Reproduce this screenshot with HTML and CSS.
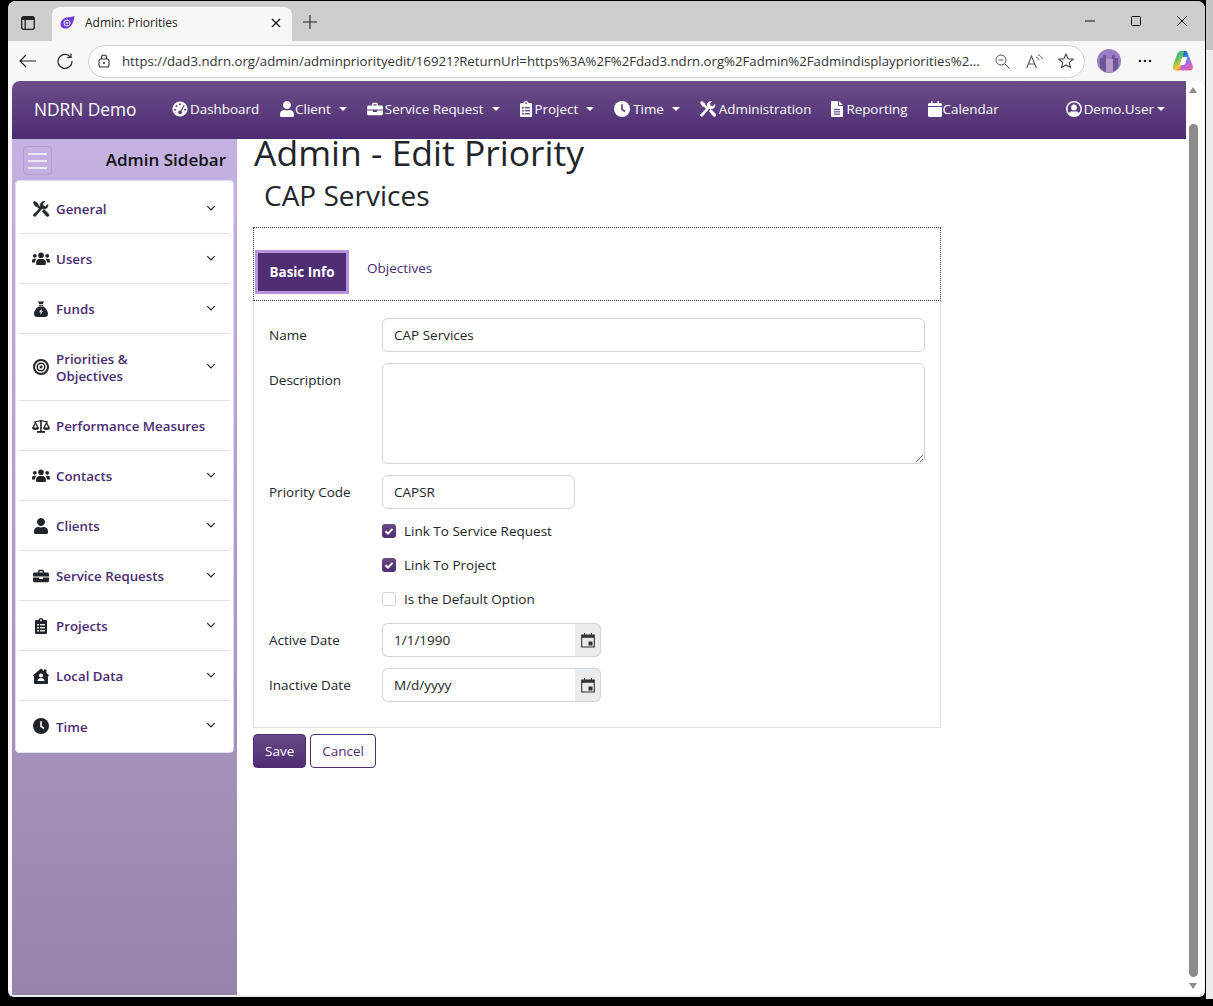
FILE: index.html
```html
<!DOCTYPE html>
<html lang="en">
<head>
<meta charset="UTF-8">
<meta name="viewport" content="width=device-width, initial-scale=1.0">
<link rel="stylesheet" href="styles.css">
<title>Admin: Priorities</title>
</head>
<body>
<svg class="defs" width="0" height="0">
  <defs>
    <linearGradient id="cp-left" x1="0" y1="0" x2="0.6" y2="1"><stop offset="0" stop-color="#1f9be0"/><stop offset=".45" stop-color="#62c65a"/><stop offset=".75" stop-color="#f3c33a"/><stop offset="1" stop-color="#f0703a"/></linearGradient>
    <linearGradient id="cp-right" x1="0.3" y1="0" x2="0.7" y2="1"><stop offset="0" stop-color="#1c4fc4"/><stop offset=".35" stop-color="#3f8fe8"/><stop offset=".65" stop-color="#b066e6"/><stop offset="1" stop-color="#ef5fa0"/></linearGradient>
  </defs>
  <symbol id="i-gauge" viewBox="0 0 16 16"><circle cx="8" cy="8" r="7.6" fill="currentColor"/><g fill="var(--hole)"><circle cx="8" cy="3.3" r="1"/><circle cx="4.4" cy="5" r="1"/><circle cx="3" cy="8.8" r="1"/><circle cx="13" cy="8.8" r="1"/><path d="M11.8 3.9l1 .6-3.3 5.6a1.900 1.900 0 1 1-1-.6z"/></g></symbol>
  <symbol id="i-user" viewBox="0 0 448 512"><path fill="currentColor" d="M224 256c70.7 0 128-57.3 128-128S294.7 0 224 0 96 57.3 96 128s57.3 128 128 128zm89.6 32h-16.7c-22.2 10.2-46.9 16-72.9 16s-50.6-5.8-72.9-16h-16.7C60.2 288 0 348.2 0 422.4V464c0 26.5 21.5 48 48 48h352c26.5 0 48-21.5 48-48v-41.6c0-74.2-60.2-134.4-134.4-134.4z"/></symbol>
  <symbol id="i-case" viewBox="0 0 16 16"><path fill="currentColor" fill-rule="evenodd" d="M5 3.2C5 2.3 5.6 1.7 6.4 1.7h3.2c.8 0 1.4.6 1.4 1.5V4.5h3.5c.8 0 1.5.7 1.5 1.5v2.6H0V6c0-.8.7-1.5 1.500-1.500H5zm1.400.1v1.200h3.200V3.300zM0 9.600h6v1.300h4V9.600h6v3.200c0 .8-.7 1.500-1.500 1.500h-13C.7 14.300 0 13.600 0 12.800z"/></symbol>
  <symbol id="i-clipboard" viewBox="0 0 12 16"><path fill="currentColor" d="M1.300 2H3.500C3.700.8 4.700 0 6 0s2.300.8 2.500 2h2.200C11.400 2 12 2.600 12 3.300v11.400c0 .7-.6 1.300-1.300 1.300H1.300C.6 16 0 15.400 0 14.700V3.300C0 2.600.6 2 1.300 2z"/><g fill="var(--hole)"><circle cx="6" cy="2.200" r=".9"/><rect x="2.200" y="6" width="1.600" height="1.600"/><rect x="5" y="6.100" width="5" height="1.300"/><rect x="2.200" y="9" width="1.600" height="1.600"/><rect x="5" y="9.100" width="5" height="1.300"/><rect x="2.200" y="12" width="1.600" height="1.600"/><rect x="5" y="12.100" width="5" height="1.300"/></g></symbol>
  <symbol id="i-clock" viewBox="0 0 16 16"><circle cx="8" cy="8" r="8" fill="currentColor"/><path d="M8 3.300V8.300l3 2.200" fill="none" stroke="var(--hole)" stroke-width="1.600"/></symbol>
  <symbol id="i-tools" viewBox="0 0 16 16"><g fill="currentColor" stroke="currentColor" stroke-width=".7"><path d="M1 15l-.8-1 7.600-7.400-.5-1.400C6.700 3 8.600.4 11.600.3l-2 2.200.6 2.400 2.400.7L14.900 3.400c.4 3-2.400 5.100-4.700 4.300L9 7.400 2.400 15.200c-.4.400-1 .300-1.400-.200z"/><path d="M.3 1.300 1.500.2 5 2.700v1.400l3.200 3.200-1.200 1.200-3.200-3.200H2.500z"/><path d="M9.300 10.200 11 8.500l4.500 4.500c.6.600.6 1.500 0 2.100-.6.600-1.500.6-2.100 0z"/></g></symbol>
  <symbol id="i-file" viewBox="0 0 12 16"><path fill="currentColor" d="M1 0H7V4.300C7 4.700 7.300 5 7.700 5H12V15c0 .6-.4 1-1 1H1c-.6 0-1-.4-1-1V1C0 .4.400 0 1 0zM8 0l4 4H8z"/><g fill="var(--hole)"><rect x="3" y="8" width="6" height="1.100"/><rect x="3" y="10.300" width="6" height="1.100"/><rect x="3" y="12.600" width="6" height="1.100"/></g></symbol>
  <symbol id="i-cal" viewBox="0 0 14 16"><path fill="currentColor" d="M3 0h1.500v2h5V0H11v2h1.500C13.300 2 14 2.700 14 3.500V5H0V3.500C0 2.700.7 2 1.500 2H3zM0 6h14v8.500c0 .8-.7 1.500-1.500 1.500h-11C.7 16 0 15.300 0 14.500z"/></symbol>
  <symbol id="i-ucircle" viewBox="0 0 16 16"><path fill="currentColor" fill-rule="evenodd" d="M8 0a8 8 0 1 1 0 16A8 8 0 0 1 8 0zm0 1.600a6.400 6.400 0 0 0-4.900 10.500C3.800 10.900 5 10.200 6 10.200c.7.300 1.300.4 2 .4s1.300-.1 2-.4c1 0 2.200.7 2.900 1.900A6.400 6.400 0 0 0 8 1.600zM8 3.500a2.900 2.900 0 1 1 0 5.800 2.900 2.900 0 0 1 0-5.800z"/></symbol>
  <symbol id="i-users" viewBox="0 0 18 14"><g fill="currentColor"><circle cx="9" cy="3.300" r="2.800"/><circle cx="2.800" cy="3.800" r="1.900"/><circle cx="15.200" cy="3.800" r="1.900"/><path d="M5 13c-.5 0-.9-.4-.9-.9V10.300C4.100 8.400 5.600 7 7.300 7h3.400c1.700 0 3.200 1.400 3.200 3.300v1.800c0 .5-.4.900-.9.900z"/><path d="M0 10.400V9c0-1.300.9-2.200 2-2.200h1.400c.3 0 .6.100.9.300C3.500 8 3 9 3 10.400z"/><path d="M18 10.400V9c0-1.300-.9-2.200-2-2.200h-1.400c-.3 0-.6.100-.9.300.8.900 1.300 1.900 1.300 3.300z"/></g></symbol>
  <symbol id="i-sack" viewBox="0 0 14 16"><path fill="currentColor" d="M4 .5h6L8.800 3.200H5.200zM5 4h4v.8H5zM4.800 5.600h4.400C11.500 7 14 9.800 14 13c0 1.700-1.300 3-3 3H3c-1.700 0-3-1.300-3-3C0 9.800 2.500 7 4.800 5.600z"/><path fill="var(--hole)" d="M7.800 7.500 5 11.300h1.700L6.200 14l2.800-3.800H7.300z"/></symbol>
  <symbol id="i-target" viewBox="0 0 16 16"><g fill="none" stroke="currentColor"><circle cx="8" cy="8" r="7" stroke-width="2"/><circle cx="8" cy="8" r="3.800" stroke-width="1.500"/></g><circle cx="8" cy="8" r="1.500" fill="currentColor"/></symbol>
  <symbol id="i-scale" viewBox="0 0 18 14"><g fill="currentColor"><rect x="8.200" y="1" width="1.600" height="11"/><rect x="5" y="12" width="8" height="1.800"/><path d="M2 2.500 9 1l7 1.500v1L9 2.200 2 3.500z"/><path fill-rule="evenodd" d="M3.500 2.500 7 9c0 1.200-1.500 2-3.500 2S0 10.200 0 9zM3.500 5 1.900 8.600h3.200zM14.500 2.500 18 9c0 1.200-1.500 2-3.500 2S11 10.200 11 9zM14.500 5 12.900 8.600h3.200z"/></g></symbol>
  <symbol id="i-house" viewBox="0 0 16 16"><path fill="currentColor" d="M8 .5 11 3V1.500h2.500V5L16 7.300 15 8.500V15c0 .6-.4 1-1 1H2c-.6 0-1-.4-1-1V8.500L0 7.300z"/><g fill="var(--hole)"><circle cx="8" cy="7.500" r="2"/><path d="M4.500 13c0-1.500 1.300-2.700 2.500-2.700h2c1.200 0 2.500 1.200 2.500 2.700z"/></g></symbol>
  <symbol id="i-chev" viewBox="0 0 16 16"><path d="M3 5.500 8 10.500 13 5.500" fill="none" stroke="currentColor" stroke-width="1.700"/></symbol>
  <symbol id="i-date" viewBox="0 0 14 16"><path fill="none" stroke="currentColor" stroke-width="1.100" d="M.7 3h12.600v12H.7zM3.500 1v3M10.500 1v3"/><rect x=".7" y="3" width="12.600" height="2.800" fill="currentColor"/><rect x="7.500" y="9.500" width="4" height="4" fill="currentColor"/></symbol>
  <symbol id="i-check" viewBox="0 0 14 14"><path d="M3.500 7.300 6 9.700l4.500-4.800" fill="none" stroke="#fff" stroke-width="2"/></symbol>
</svg>

<div class="window">
  <div class="tabstrip">
    <svg class="tab-side" width="14" height="14" viewBox="0 0 14 14"><path d="M.7 2.700C.7 1.600 1.600.7 2.700.7h8.600c1.100 0 2 .9 2 2v8.600c0 1.100-.9 2-2 2H2.700c-1.100 0-2-.9-2-2zM4.200 3.800v9.600" fill="none" stroke="#222" stroke-width="1.300"/><rect x="1" y="1" width="12" height="3" fill="#222"/></svg>
    <div class="tab">
      <svg class="favicon" width="15" height="13" viewBox="0 0 15 13"><path d="M14.500 0C14 3 13.500 7 11 10c-2.500 3-7.500 3.500-9.500 1C-.5 8.500.5 4.500 4 2.500 7 .8 11 1.500 14.500 0z" fill="#6d3fd6"/><circle cx="7" cy="7" r="3" fill="none" stroke="#fff" stroke-width="1"/><circle cx="7" cy="7" r="1" fill="#fff"/></svg>
      <span class="tab-title">Admin: Priorities</span>
      <svg class="tab-close" width="10" height="10" viewBox="0 0 10 10"><path d="M1 1l8 8M9 1 1 9" stroke="#111" stroke-width="1.300"/></svg>
    </div>
    <svg class="tab-plus" width="14" height="14" viewBox="0 0 14 14"><path d="M7 0v14M0 7h14" stroke="#222" stroke-width="1.100"/></svg>
    <div class="win-btns">
      <svg width="10" height="10" viewBox="0 0 10 10"><path d="M0 5h10" stroke="#111"/></svg>
      <svg width="10" height="10" viewBox="0 0 10 10"><rect x=".5" y=".5" width="9" height="9" rx="1" fill="none" stroke="#111"/></svg>
      <svg width="10" height="10" viewBox="0 0 10 10"><path d="M0 0l10 10M10 0 0 10" stroke="#111"/></svg>
    </div>
  </div>

  <div class="toolbar">
    <svg class="tool-back" width="18" height="14" viewBox="0 0 18 14"><path d="M17 7H1M7 1 1 7l6 6" fill="none" stroke="#222" stroke-width="1.200"/></svg>
    <svg class="tool-reload" width="16" height="16" viewBox="0 0 16 16"><path d="M13.500 4A7 7 0 1 0 15 8M14 .5V4.500H10" fill="none" stroke="#222" stroke-width="1.200"/></svg>
    <div class="url">
      <svg width="12" height="14" viewBox="0 0 12 14"><rect x="1" y="5" width="10" height="8" rx="2" fill="none" stroke="#333" stroke-width="1.100"/><path d="M3.500 5V3.500a2.500 2.500 0 0 1 5 0V5" fill="none" stroke="#333" stroke-width="1.100"/><circle cx="6" cy="9" r="1" fill="#333"/></svg>
      <span class="url-text">https://dad3.ndrn.org/admin/adminpriorityedit/16921?ReturnUrl=https%3A%2F%2Fdad3.ndrn.org%2Fadmin%2Fadmindisplaypriorities%2...</span>
      <svg class="url-zoom" width="15" height="15" viewBox="0 0 15 15"><circle cx="6" cy="6" r="5" fill="none" stroke="#555"/><path d="M9.700 9.700 14.500 14.500M3.500 6h5" stroke="#555"/></svg>
      <svg class="url-read" width="18" height="15" viewBox="0 0 18 15"><path d="M.7 14 5.500 2l4.800 12M2.500 10h6" fill="none" stroke="#555" stroke-width="1.100"/><path d="M10 3c1.500.5 2.500 1.500 3 3M12 .7c2 .7 3.500 2.200 4.300 4.300" fill="none" stroke="#555"/></svg>
      <svg class="url-star" width="16" height="16" viewBox="0 0 16 16"><path d="M8 1l2.100 4.700 5 .5-3.800 3.300 1.100 5L8 12l-4.400 2.500 1.100-5L.9 6.200l5-.5z" fill="none" stroke="#444" stroke-width="1.100"/></svg>
    </div>
    <svg class="avatar" width="24" height="24" viewBox="0 0 24 24"><circle cx="12" cy="12" r="12" fill="#9a7cc4"/><path d="M3 19V9h3V6h3v5h6V6h3v3h3v10l-5 4H8z" fill="#6d5596"/><rect x="9" y="10" width="7" height="13" fill="#b79ac9"/></svg>
    <svg class="dots" width="14" height="4" viewBox="0 0 14 4"><circle cx="2" cy="2" r="1.300" fill="#222"/><circle cx="7" cy="2" r="1.300" fill="#222"/><circle cx="12" cy="2" r="1.300" fill="#222"/></svg>
    <svg class="copilot" width="22" height="22" viewBox="0 0 22 22"><path d="M9 1h5c1 0 1.500.7 1 1.600L10 18c-.5 1.500-1.500 2.500-3 2.500H4.500C2 20.500.3 18.500 1 16L5 4.500C5.700 2.300 7 1 9 1z" fill="url(#cp-left)"/><path d="M12 1c2 0 3.300.8 4 3l4.800 12c.8 2.300-.8 4.500-3.300 4.500H10c-1.500 0-2-.8-1.500-2z" fill="url(#cp-right)"/><path d="M11.500 7h2.500c.8 0 1.100.5.900 1.200l-1.800 5.600c-.3.800-.9 1.200-1.700 1.200H9c-.8 0-1.100-.5-.9-1.200l1.800-5.600c.3-.8.800-1.200 1.600-1.200z" fill="#fff"/></svg>
  </div>

  <div class="viewport">
    <div class="page">
      <nav class="navbar">
        <span class="brand">NDRN Demo</span>
        <a class="nav-link nl-dash"><svg class="nav-ico"><use href="#i-gauge"/></svg>Dashboard</a>
        <a class="nav-link"><svg class="nav-ico ico-user"><use href="#i-user"/></svg>Client<i class="caret"></i></a>
        <a class="nav-link"><svg class="nav-ico"><use href="#i-case"/></svg>Service Request<i class="caret"></i></a>
        <a class="nav-link"><svg class="nav-ico ico-file"><use href="#i-clipboard"/></svg>Project<i class="caret"></i></a>
        <a class="nav-link"><svg class="nav-ico ico-wide"><use href="#i-clock"/></svg>Time<i class="caret"></i></a>
        <a class="nav-link"><svg class="nav-ico ico-wide"><use href="#i-tools"/></svg>Administration</a>
        <a class="nav-link"><svg class="nav-ico ico-file"><use href="#i-file"/></svg>Reporting</a>
        <a class="nav-link"><svg class="nav-ico ico-cal"><use href="#i-cal"/></svg>Calendar</a>
        <a class="nav-link nav-user"><svg class="nav-ico"><use href="#i-ucircle"/></svg>Demo.User<i class="caret caret-user"></i></a>
      </nav>
      <div class="content">
        <aside class="sidebar">
          <div class="side-head">
            <span class="toggler"><i></i><i></i><i></i></span>
            <span class="side-title">Admin Sidebar</span>
          </div>
          <ul class="side-menu">
            <li><svg class="side-ico"><use href="#i-tools"/></svg><span>General</span><svg class="chev"><use href="#i-chev"/></svg></li>
            <li><svg class="side-ico"><use href="#i-users"/></svg><span>Users</span><svg class="chev"><use href="#i-chev"/></svg></li>
            <li><svg class="side-ico"><use href="#i-sack"/></svg><span>Funds</span><svg class="chev"><use href="#i-chev"/></svg></li>
            <li class="tall"><svg class="side-ico"><use href="#i-target"/></svg><span>Priorities &amp;<br>Objectives</span><svg class="chev"><use href="#i-chev"/></svg></li>
            <li><svg class="side-ico"><use href="#i-scale"/></svg><span>Performance Measures</span></li>
            <li><svg class="side-ico"><use href="#i-users"/></svg><span>Contacts</span><svg class="chev"><use href="#i-chev"/></svg></li>
            <li><svg class="side-ico"><use href="#i-user"/></svg><span>Clients</span><svg class="chev"><use href="#i-chev"/></svg></li>
            <li><svg class="side-ico"><use href="#i-case"/></svg><span>Service Requests</span><svg class="chev"><use href="#i-chev"/></svg></li>
            <li><svg class="side-ico"><use href="#i-clipboard"/></svg><span>Projects</span><svg class="chev"><use href="#i-chev"/></svg></li>
            <li><svg class="side-ico"><use href="#i-house"/></svg><span>Local Data</span><svg class="chev"><use href="#i-chev"/></svg></li>
            <li><svg class="side-ico"><use href="#i-clock"/></svg><span>Time</span><svg class="chev"><use href="#i-chev"/></svg></li>
          </ul>
        </aside>
        <main class="main">
          <h1>Admin - Edit Priority</h1>
          <h3>CAP Services</h3>
          <div class="tabs">
            <span class="tab-on">Basic Info</span>
            <span class="tab-off">Objectives</span>
          </div>
          <div class="card">
            <div class="row"><label>Name</label><input class="input" value="CAP Services"></div>
            <div class="row"><label>Description</label><textarea class="input area"></textarea></div>
            <div class="row"><label>Priority Code</label><input class="input short" value="CAPSR"></div>
            <div class="checks">
              <div class="check"><span class="box on"><svg width="14" height="14"><use href="#i-check"/></svg></span><span>Link To Service Request</span></div>
              <div class="check"><span class="box on"><svg width="14" height="14"><use href="#i-check"/></svg></span><span>Link To Project</span></div>
              <div class="check"><span class="box"></span><span>Is the Default Option</span></div>
            </div>
            <div class="row"><label>Active Date</label><div class="date"><input class="input" value="1/1/1990"><span class="addon"><svg width="14" height="16"><use href="#i-date"/></svg></span></div></div>
            <div class="row"><label>Inactive Date</label><div class="date"><input class="input" value="M/d/yyyy"><span class="addon"><svg width="14" height="16"><use href="#i-date"/></svg></span></div></div>
          </div>
          <div class="actions">
            <button class="btn btn-save">Save</button>
            <button class="btn btn-cancel">Cancel</button>
          </div>
        </main>
      </div>
    </div>
    <div class="scrollbar">
      <i class="arrow-up"></i>
      <div class="thumb"></div>
      <i class="arrow-down"></i>
    </div>
  </div>
</div>
</body>
</html>
```

FILE: styles.css
```css
* { box-sizing: border-box; }
html, body { height: 100%; margin: 0; }
body { background: linear-gradient(#c4c4c4, #c4c4c4) 1206px 0 / 7px 50px no-repeat, linear-gradient(#ececec, #ececec) 1206px 50px / 7px 949px no-repeat, #000; font-family: "Open Sans", "Noto Sans", sans-serif; font-size: 14px; color: #212529; overflow: hidden; }
.defs { position: absolute; }

/* browser chrome */
.window { display: flex; flex-direction: column; width: 1197px; height: 996px; margin: 1px 0 0 8px; background: #f7f7f7; border-radius: 8px 8px 6px 6px; border-bottom: 2px solid #ececec; overflow: hidden; }
.tabstrip { display: flex; align-items: flex-end; height: 40px; background: #cdcdcd; flex: none; }
.tab-side { margin: 0 0 11px 13px; }
.tab { display: flex; align-items: center; width: 240px; height: 34px; margin-left: 17px; padding: 0 11px 3px 8px; background: #f7f7f7; border-radius: 8px 8px 0 0; }
.tab-title { flex: 1; margin-left: 10px; font-size: 12px; color: #222; }
.tab-plus { margin: 0 0 12px 11px; }
.win-btns { display: flex; gap: 36px; margin: 0 18px 15px auto; }
.toolbar { display: flex; align-items: center; height: 40px; flex: none; background: #f7f7f7; }
.tool-back { margin-left: 11px; }
.tool-reload { margin-left: 20px; }
.url { display: flex; align-items: center; width: 997px; height: 33px; margin-left: 15px; padding-left: 9px; background: #fff; border: 1px solid #cfcfcf; border-radius: 17px; }
.url-text { margin-left: 12px; width: 865px; flex: none; font-size: 13.2px; color: #333; white-space: nowrap; }
.url-zoom { margin-left: 8px; }
.url-read { margin-left: 16px; }
.url-star { margin-left: 14px; }
.avatar { margin-left: 12px; }
.dots { margin-left: 17px; }
.copilot { margin-left: 20px; }

/* page */
.viewport { display: flex; flex: 1; min-height: 0; margin: 0 1px 0 4px; background: #fff; border-radius: 8px 8px 0 0; overflow: hidden; }
.page { display: flex; flex-direction: column; flex: 1; min-width: 0; }
.navbar { display: flex; align-items: center; height: 58px; flex: none; padding: 0 0 2px 22px; background: linear-gradient(#6a4d88, #4e2c72); color: #fff; font-size: 13.4px; white-space: nowrap; }
.brand { width: 138px; font-size: 17.3px; }
.nav-link { display: flex; align-items: center; margin-right: 20px; color: #fff; }
.nl-dash { margin-right: 21px; }
.nav-ico { width: 16px; height: 16px; margin-right: 2px; --hole: #5b3c7d; }
.ico-user { width: 14px; margin-right: 1px; }
.ico-file { width: 12px; margin-right: 3px; }
.ico-cal { width: 14px; margin-right: 1px; }
.ico-wide { margin-right: 3px; }
.caret { width: 0; height: 0; margin-left: 8px; border: 4px solid transparent; border-top-color: #fff; border-bottom: 0; }
.caret-user { margin-left: 3px; }
.nav-user { margin-left: auto; margin-right: 21px; }
.content { display: flex; flex: 1; min-height: 0; }
.sidebar { width: 225px; flex: none; padding: 7px 3px 0; background: linear-gradient(#c5b1e2, #9884aa); }
.side-head { display: flex; align-items: center; justify-content: space-between; height: 29px; margin-bottom: 5px; padding: 0 8px; }
.toggler { display: flex; flex-direction: column; justify-content: center; gap: 5px; width: 29px; height: 29px; padding: 0 4px; border: 1px solid #b39ad4; border-radius: 4px; }
.toggler i { height: 2px; background: #eee6f6; }
.side-title { margin-bottom: 2px; font-size: 17px; font-weight: 600; color: #111; }
.side-menu { margin: 0; padding: 3px 3px 1px; list-style: none; background: #fff; border: 1px solid #e4dcef; border-radius: 4px; }
.side-menu li { display: flex; align-items: center; height: 50px; padding: 0 13px; border-bottom: 1px solid #dee2e6; color: #4a2a70; font-size: 13.3px; font-weight: 600; line-height: 17px; }
.side-menu li:last-child { border-bottom: 0; }
.side-menu li.tall { height: 67px; }
.side-menu li span { padding-top: 2px; }
.side-ico { width: 18px; height: 16px; margin-right: 6px; flex: none; color: #212529; --hole: #fff; }
.chev { width: 12px; height: 12px; margin: 0 0 2px auto; flex: none; color: #212529; }
.main { flex: 1; min-width: 0; padding-left: 16px; overflow: hidden; }
h1 { margin: -11px 0 0 1px; font-size: 35.5px; font-weight: 500; line-height: 48px; }
h3 { margin: 2px 0 15px; padding-left: 11px; font-size: 28px; font-weight: 500; line-height: 34px; }
.tabs { display: flex; align-items: flex-start; width: 688px; height: 74px; padding: 22px 0 0 1px; border: 1px dotted #444; }
.tab-on { display: flex; align-items: center; justify-content: center; width: 94px; height: 44px; padding-bottom: 1px; background: #4f2d73; border: 3px solid #b794e2; color: #fff; font-size: 13.4px; font-weight: 700; }
.tab-off { margin: 9px 0 0 18px; color: #4a2a70; font-size: 13.5px; }
.card { width: 688px; padding: 17px 15px 25px; border: 1px solid #dee2e6; border-top: 0; }
.row { display: flex; align-items: flex-start; margin-bottom: 11px; }
.row:last-child { margin-bottom: 0; }
.row label { width: 113px; flex: none; font-size: 13.5px; line-height: 34px; }
.input { display: block; width: 543px; height: 34px; padding: 0 11px; background: #fff; border: 1px solid #ced4da; border-radius: 6px; color: #212529; font-family: inherit; font-size: 13.5px; }
.area { height: 101px; }
.short { width: 193px; }
.checks { margin: -6px 0 7px 113px; }
.check { display: flex; align-items: center; height: 34px; font-size: 13.5px; }
.box { display: block; width: 14px; height: 14px; margin-right: 8px; background: #fff; border: 1px solid #ced4da; border-radius: 3px; }
.box.on { background: linear-gradient(#674a85, #4e2c72); border: 0; }
.box svg { display: block; }
.date { display: flex; width: 219px; }
.date .input { width: 193px; border-radius: 6px 0 0 6px; border-right: 0; }
.addon { display: flex; align-items: center; justify-content: center; width: 26px; height: 34px; background: #e9ecef; border: 1px solid #ced4da; border-left: 0; border-radius: 0 6px 6px 0; color: #333; }
.actions { display: flex; gap: 4px; margin-top: 6px; }
.btn { height: 34px; padding: 0 11px; border-radius: 4px; font-family: inherit; font-size: 13.5px; }
.btn-save { width: 53px; background: linear-gradient(#674a85, #4e2c72); border: 1px solid #4f2d73; color: #fff; }
.btn-cancel { width: 66px; background: #fff; border: 1px solid #4f2d73; color: #4f2d73; }

/* scrollbar */
.scrollbar { display: flex; flex-direction: column; align-items: flex-start; width: 18px; flex: none; padding: 6px 0 6px 3px; background: #fff; border-radius: 0 8px 0 0; }
.thumb { width: 9px; flex: 1; margin: 31px 0 6px; background: #8c8c8c; border-radius: 5px; }
.arrow-up, .arrow-down { width: 0; height: 0; border: 4.5px solid transparent; }
.arrow-up { border-top: 0; border-bottom: 6px solid #8c8c8c; }
.arrow-down { border-bottom: 0; border-top: 6px solid #8c8c8c; }
```
